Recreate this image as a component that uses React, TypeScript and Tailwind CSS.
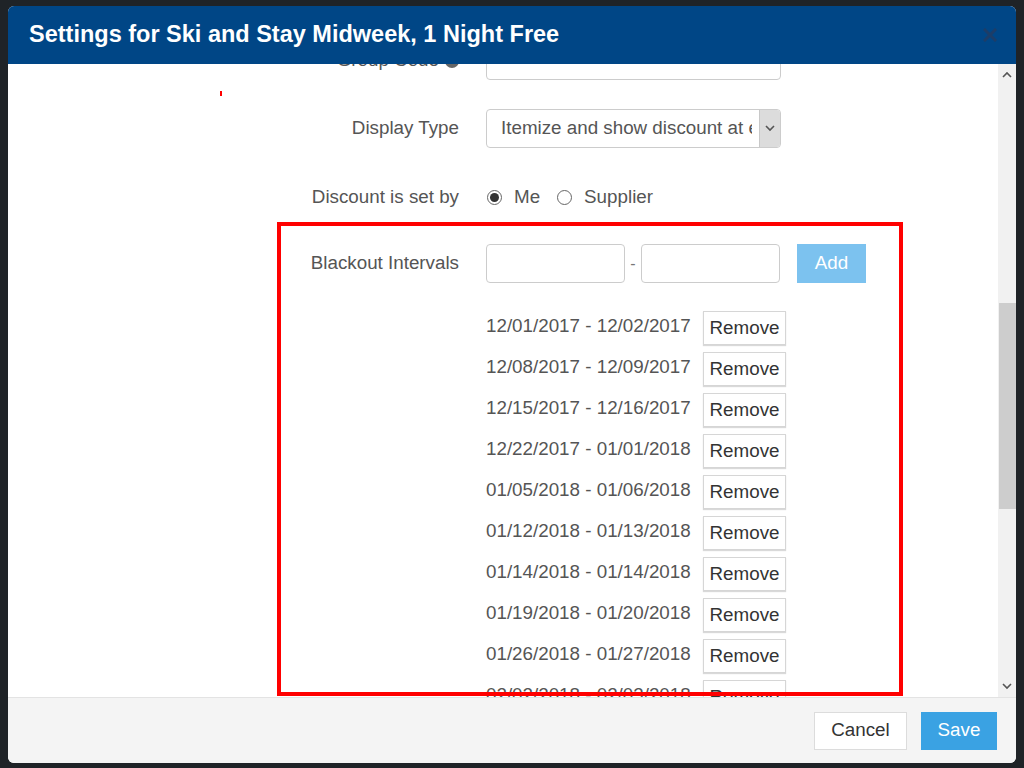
import React from 'react';

const intervals = [
  '12/01/2017 - 12/02/2017',
  '12/08/2017 - 12/09/2017',
  '12/15/2017 - 12/16/2017',
  '12/22/2017 - 01/01/2018',
  '01/05/2018 - 01/06/2018',
  '01/12/2018 - 01/13/2018',
  '01/14/2018 - 01/14/2018',
  '01/19/2018 - 01/20/2018',
  '01/26/2018 - 01/27/2018',
  '02/02/2018 - 02/03/2018',
];

function Label({ children }: { children: React.ReactNode }) {
  return (
    <div className="w-[451px] shrink-0 text-right text-[18.8px] text-[#555]">{children}</div>
  );
}

function Radio({ checked }: { checked?: boolean }) {
  return (
    <span className="w-[15px] h-[15px] rounded-full border border-[#666] bg-white flex items-center justify-center shrink-0">
      {checked && <span className="w-[9px] h-[9px] rounded-full bg-[#333]" />}
    </span>
  );
}

function Chevron({ up }: { up?: boolean }) {
  return (
    <svg width="10" height="7" viewBox="0 0 10 7" className="text-[#555]">
      <path d={up ? 'M1 6 L5 2 L9 6' : 'M1 1 L5 5 L9 1'} fill="none" stroke="currentColor" strokeWidth="1.6" />
    </svg>
  );
}

export default function App() {
  return (
    <div
      className="h-[768px] w-[1024px] bg-[#1f2327] pt-[6px] px-[8px] pb-[5px] overflow-hidden"
      style={{ fontFamily: '"Liberation Sans", Arial, sans-serif' }}
    >
      <div className="h-full flex flex-col rounded-[6px] overflow-hidden bg-white">
        {/* header */}
        <div className="h-[58px] shrink-0 bg-[#004686] flex items-center justify-between pl-[21px] pr-[19px]">
          <h1 className="text-white font-bold text-[23.5px] leading-none">Settings for Ski and Stay Midweek, 1 Night Free</h1>
          <svg width="14" height="14" viewBox="0 0 14 14">
            <path d="M2 2 L12 12 M12 2 L2 12" stroke="#1c3d68" strokeWidth="3" strokeLinecap="square" />
          </svg>
        </div>

        {/* body */}
        <div className="flex-1 min-h-0 flex">
          <div className="relative flex-1 overflow-hidden">
            <div className="-mt-[23px] flex flex-col">
              {/* Group Code */}
              <div className="flex items-center gap-[27px] h-[39px]">
                <Label>
                  <span className="inline-flex items-center gap-[6px]">
                    Group Code
                    <span className="w-[14px] h-[14px] rounded-full bg-[#666] text-white text-[10px] font-bold flex items-center justify-center">?</span>
                  </span>
                </Label>
                <div className="w-[295px] h-[39px] rounded-[4px] border border-[#ccc] bg-white" />
              </div>

              {/* Display Type */}
              <div className="flex items-center gap-[27px] h-[39px] mt-[29px]">
                <Label>Display Type</Label>
                <div className="w-[295px] h-[39px] rounded-[4px] border border-[#ccc] bg-white flex overflow-hidden">
                  <div className="flex-1 overflow-hidden whitespace-nowrap pl-[14px] flex items-center text-[18.8px] text-[#555]">
                    Itemize and show discount at end
                  </div>
                  <div className="w-[21px] ml-[7px] bg-[#dcdcdc] border-l border-[#c8c8c8] flex items-center justify-center">
                    <Chevron />
                  </div>
                </div>
              </div>

              {/* Discount is set by */}
              <div className="flex items-center gap-[27px] h-[39px] mt-[30px]">
                <Label>Discount is set by</Label>
                <div className="flex items-center text-[18.8px] text-[#555]">
                  <span className="ml-[1px]"><Radio checked /></span>
                  <span className="ml-[12px]">Me</span>
                  <span className="ml-[17px]"><Radio /></span>
                  <span className="ml-[12px]">Supplier</span>
                </div>
              </div>

              {/* Blackout Intervals */}
              <div className="flex items-center gap-[27px] h-[39px] mt-[27px]">
                <Label>Blackout Intervals</Label>
                <div className="flex items-center">
                  <div className="w-[139px] h-[39px] rounded-[4px] border border-[#ccc] bg-white" />
                  <span className="w-[16px] text-center text-[16px] text-[#777]">-</span>
                  <div className="w-[139px] h-[39px] rounded-[4px] border border-[#ccc] bg-white" />
                  <button className="ml-[17px] w-[69px] h-[39px] bg-[#7cc2ef] text-white text-[18.8px]">Add</button>
                </div>
              </div>

              {/* intervals */}
              <div className="flex flex-col gap-[7px] mt-[28px] pl-[478px]">
                {intervals.map(d => (
                  <div key={d} className="flex items-center h-[34px]">
                    <span className="w-[217px] text-[18.8px] text-[#555] pb-[3px] whitespace-nowrap">{d}</span>
                    <button className="w-[83px] h-[34px] bg-white border border-[#d6d6d6] shadow-[0_1px_1px_rgba(0,0,0,0.15)] text-[18.8px] text-[#333]">
                      Remove
                    </button>
                  </div>
                ))}
              </div>
            </div>

            {/* stray mark */}
            <span className="absolute left-[212px] top-[27px] w-[2px] h-[5px] bg-[#ff0000]" />
            {/* annotation box */}
            <div className="absolute left-[269px] top-[158px] w-[626px] h-[474px] border-4 border-[#ff0000] pointer-events-none" />
          </div>

          {/* scrollbar */}
          <div className="w-[18px] shrink-0 bg-[#f1f1f1] flex flex-col items-center">
            <div className="h-[18px] flex items-center justify-center mt-[1px]"><Chevron up /></div>
            <div className="h-[220px]" />
            <div className="w-[17px] h-[206px] bg-[#cdcdcd]" />
            <div className="flex-1" />
            <div className="h-[18px] flex items-center justify-center mb-[2px]"><Chevron /></div>
          </div>
        </div>

        {/* footer */}
        <div className="h-[66px] shrink-0 bg-[#f4f4f4] border-t border-[#e3e3e3] flex items-center justify-end gap-[14px] pr-[19px]">
          <button className="w-[93px] h-[38px] bg-white border border-[#dcdcdc] text-[18.8px] text-[#333]">Cancel</button>
          <button className="w-[76px] h-[38px] bg-[#3aa2e3] text-white text-[18.8px]">Save</button>
        </div>
      </div>
    </div>
  );
}
